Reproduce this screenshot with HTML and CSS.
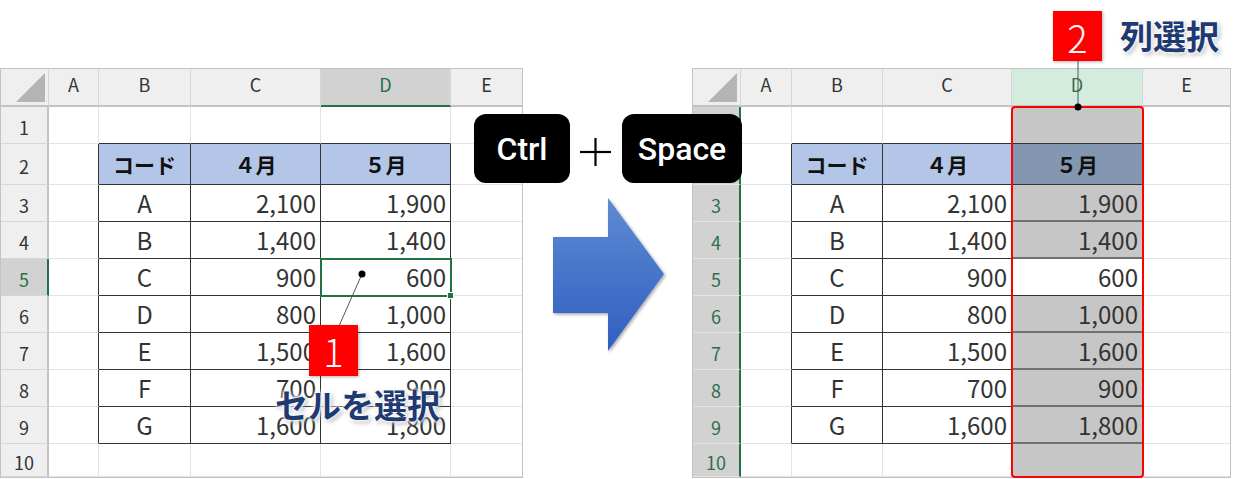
FILE: index.html
```html
<!DOCTYPE html>
<html lang="ja">
<head>
    <meta charset="UTF-8">
    <title>列選択 Ctrl + Space</title>
    <link rel="stylesheet" href="styles.css">
</head>
<body>
<div class="page">
    <!-- 左: セルを選択した状態 -->
    <div class="sheet sheet-l">
        <div class="cell hd col corner"></div>
        <div class="cell hd col">A</div>
        <div class="cell hd col">B</div>
        <div class="cell hd col">C</div>
        <div class="cell hd col on">D</div>
        <div class="cell hd col">E</div>

        <div class="cell hd row">1</div><div class="cell"></div><div class="cell tt"></div><div class="cell tt"></div><div class="cell tt"></div><div class="cell"></div>
        <div class="cell hd row">2</div><div class="cell tl"></div><div class="cell t th">コード</div><div class="cell t th">４月</div><div class="cell t th">５月</div><div class="cell"></div>
        <div class="cell hd row">3</div><div class="cell tl"></div><div class="cell t">A</div><div class="cell t n">2,100</div><div class="cell t n">1,900</div><div class="cell"></div>
        <div class="cell hd row">4</div><div class="cell tl"></div><div class="cell t">B</div><div class="cell t n">1,400</div><div class="cell t n">1,400</div><div class="cell"></div>
        <div class="cell hd row on">5</div><div class="cell tl"></div><div class="cell t">C</div><div class="cell t n">900</div><div class="cell t n act">600</div><div class="cell"></div>
        <div class="cell hd row">6</div><div class="cell tl"></div><div class="cell t">D</div><div class="cell t n">800</div><div class="cell t n">1,000</div><div class="cell"></div>
        <div class="cell hd row">7</div><div class="cell tl"></div><div class="cell t">E</div><div class="cell t n">1,500</div><div class="cell t n">1,600</div><div class="cell"></div>
        <div class="cell hd row">8</div><div class="cell tl"></div><div class="cell t">F</div><div class="cell t n">700</div><div class="cell t n">900</div><div class="cell"></div>
        <div class="cell hd row">9</div><div class="cell tl"></div><div class="cell t">G</div><div class="cell t n">1,600</div><div class="cell t n">1,800</div><div class="cell"></div>
        <div class="cell hd row">10</div><div class="cell"></div><div class="cell"></div><div class="cell"></div><div class="cell"></div><div class="cell"></div>
    </div>

    <!-- 右: 列全体を選択した状態 -->
    <div class="sheet sheet-r">
        <div class="cell hd col corner"></div>
        <div class="cell hd col">A</div>
        <div class="cell hd col">B</div>
        <div class="cell hd col">C</div>
        <div class="cell hd col cur">D</div>
        <div class="cell hd col">E</div>

        <div class="cell hd row sel">1</div><div class="cell"></div><div class="cell tt"></div><div class="cell tt"></div><div class="cell tt sel"></div><div class="cell"></div>
        <div class="cell hd row sel">2</div><div class="cell tl"></div><div class="cell t th">コード</div><div class="cell t th">４月</div><div class="cell t th selhd">５月</div><div class="cell"></div>
        <div class="cell hd row sel">3</div><div class="cell tl"></div><div class="cell t">A</div><div class="cell t n">2,100</div><div class="cell t n sel">1,900</div><div class="cell"></div>
        <div class="cell hd row sel">4</div><div class="cell tl"></div><div class="cell t">B</div><div class="cell t n">1,400</div><div class="cell t n sel">1,400</div><div class="cell"></div>
        <div class="cell hd row sel">5</div><div class="cell tl"></div><div class="cell t">C</div><div class="cell t n">900</div><div class="cell t n">600</div><div class="cell"></div>
        <div class="cell hd row sel">6</div><div class="cell tl"></div><div class="cell t">D</div><div class="cell t n">800</div><div class="cell t n sel">1,000</div><div class="cell"></div>
        <div class="cell hd row sel">7</div><div class="cell tl"></div><div class="cell t">E</div><div class="cell t n">1,500</div><div class="cell t n sel">1,600</div><div class="cell"></div>
        <div class="cell hd row sel">8</div><div class="cell tl"></div><div class="cell t">F</div><div class="cell t n">700</div><div class="cell t n sel">900</div><div class="cell"></div>
        <div class="cell hd row sel">9</div><div class="cell tl"></div><div class="cell t">G</div><div class="cell t n">1,600</div><div class="cell t n sel">1,800</div><div class="cell"></div>
        <div class="cell hd row sel">10</div><div class="cell"></div><div class="cell"></div><div class="cell"></div><div class="cell sel"></div><div class="cell"></div>

        <div class="pick"></div>
    </div>

    <svg class="marks" width="1240" height="479" viewBox="0 0 1240 479">
        <defs>
            <linearGradient id="blue" x1="0" y1="0" x2="0" y2="1">
                <stop offset="0" stop-color="#5f8ad3"/>
                <stop offset="1" stop-color="#2f5fbf"/>
            </linearGradient>
            <filter id="drop" x="-10%" y="-10%" width="130%" height="130%">
                <feDropShadow dx="1.5" dy="1.5" stdDeviation="1.5" flood-color="#000" flood-opacity="0.35"/>
            </filter>
        </defs>
        <polygon points="553,237 608,237 608,198 664,274 608,351 608,313 553,313" fill="url(#blue)" filter="url(#drop)"/>
        <!-- + -->
        <line x1="580" y1="152" x2="611" y2="152" stroke="#000" stroke-width="2.2"/>
        <line x1="595.5" y1="138" x2="595.5" y2="166" stroke="#000" stroke-width="2.2"/>
        <!-- 引き出し線 -->
        <line x1="362" y1="274" x2="339" y2="326" stroke="#555" stroke-width="1"/>
        <circle cx="362" cy="274" r="3.5" fill="#000"/>
        <line x1="1078" y1="60" x2="1078" y2="107" stroke="#555" stroke-width="1"/>
        <circle cx="1078" cy="107" r="3.5" fill="#000"/>
    </svg>

    <div class="key key-ctrl">Ctrl</div>
    <div class="key key-space">Space</div>

    <div class="tag tag-1">1</div>
    <div class="note note-1">セルを選択</div>
    <div class="tag tag-2">2</div>
    <div class="note note-2">列選択</div>
</div>
</body>
</html>
```

FILE: styles.css
```css
body {
    margin: 0;
    background: #fff;
    color: #333;
    font-family: "Noto Sans CJK JP", "Noto Sans", sans-serif;
}
.page {
    position: relative;
    width: 1240px;
    height: 479px;
    box-sizing: border-box;
    padding-top: 68px;
    display: flex;
    align-items: flex-start;
    gap: 169px;
    overflow: hidden;
}

/* シート */
.sheet {
    display: grid;
    box-sizing: border-box;
    border: 1px solid #c3c3c3;
    grid-template-rows: 38px 37px 41px repeat(7, 37px) 33px;
}
.sheet-l {
    width: 523px;
    grid-template-columns: 48px 50px 92px 130px 130px 71px;
}
.sheet-r {
    position: relative;
    width: 539px;
    grid-template-columns: 48px 51px 91px 129px 131px 87px;
}
.cell {
    box-sizing: border-box;
    display: flex;
    align-items: center;
    justify-content: center;
    border-right: 1px solid #e2e2e2;
    border-bottom: 1px solid #e2e2e2;
    font-size: 24px;
    line-height: 1;
    white-space: nowrap;
}
.cell:nth-child(6n) {
    border-right: none;
}

/* 見出し */
.hd {
    background: #efefef;
    font-size: 18px;
    color: #333;
    border-right-color: #d6d6d6;
    border-bottom-color: #d6d6d6;
}
.hd.col {
    border-bottom: 2px solid #c3c3c3;
    padding-bottom: 6px;
}
.hd.row {
    border-right: 2px solid #c3c3c3;
    padding-top: 3px;
}
.corner {
    position: relative;
}
.corner::after {
    content: "";
    position: absolute;
    right: 3px;
    bottom: 3px;
    width: 29px;
    height: 29px;
    background: #b4b4b4;
    clip-path: polygon(100% 0, 100% 100%, 0 100%);
}
.hd.col.on {
    background: #d2d2d2;
    color: #217346;
    border-bottom-color: #217346;
}
.hd.row.on {
    background: #d2d2d2;
    color: #217346;
    border-right-color: #217346;
}
.hd.col.cur {
    background: #d3ecdd;
    color: #3a6a52;
}
.hd.row.sel {
    background: #d2d2d2;
    color: #2f6e4b;
    border-right-color: #217346;
    border-bottom-color: #e4e4e4;
}

/* 表の罫線 */
.tl {
    border-right: 1px solid #333;
}
.tt {
    border-bottom: 1px solid #333;
}
.t {
    border-right: 1px solid #333;
    border-bottom: 1px solid #333;
}
.n {
    justify-content: flex-end;
    padding-right: 4px;
}
.th {
    background: #b4c6e7;
    font-size: 21px;
    font-weight: bold;
    color: #111;
}

/* 選択状態 */
.act {
    position: relative;
    z-index: 1;
    outline: 2px solid #217346;
    outline-offset: -1px;
}
.act::after {
    content: "";
    position: absolute;
    right: -4px;
    bottom: -4px;
    width: 5px;
    height: 5px;
    background: #217346;
    border: 1px solid #fff;
}
.sel {
    background: #c6c6c6;
}
.t.sel {
    border-bottom: 2px solid #707070;
}
.selhd {
    background: #8497b0;
}
.pick {
    position: absolute;
    left: 318px;
    top: 37px;
    width: 133px;
    height: 372px;
    box-sizing: border-box;
    border: 2px solid #ff0000;
    border-radius: 4px;
}

/* 重ねるもの */
.marks {
    position: absolute;
    left: 0;
    top: 0;
}
.key {
    position: absolute;
    top: 114px;
    height: 69px;
    display: flex;
    align-items: center;
    justify-content: center;
    background: #000;
    color: #fff;
    border-radius: 12px;
    font-family: Roboto, "Liberation Sans", sans-serif;
    font-weight: 500;
    font-size: 32px;
}
.key-ctrl {
    left: 474px;
    width: 96px;
}
.key-space {
    left: 622px;
    width: 120px;
}
.tag {
    position: absolute;
    width: 49px;
    height: 51px;
    display: flex;
    align-items: center;
    justify-content: center;
    background: #ff0000;
    color: #fff;
    font-size: 38px;
    font-weight: 300;
    box-shadow: 1px 1px 3px rgba(0, 0, 0, 0.3);
}
.tag-1 {
    left: 309px;
    top: 325px;
}
.tag-2 {
    left: 1053px;
    top: 11px;
    height: 50px;
}
.note {
    position: absolute;
    font-size: 33px;
    font-weight: bold;
    line-height: 1;
    color: #1f3a72;
    white-space: nowrap;
    text-shadow: 0 0 2px #fff, 0 0 3px #fff, 0 0 5px #fff, 0 0 6px #fff, 2px 2px 5px rgba(0, 0, 0, 0.45);
}
.note-1 {
    left: 275px;
    top: 388px;
}
.note-2 {
    left: 1120px;
    top: 19px;
}
```
